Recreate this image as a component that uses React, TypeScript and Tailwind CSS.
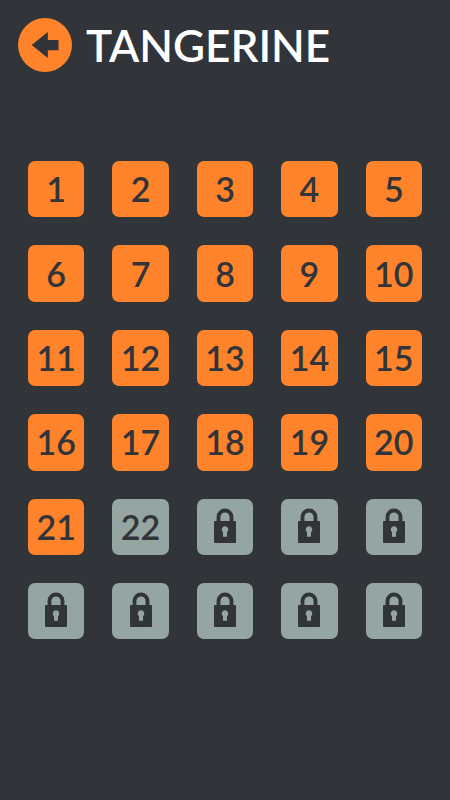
const TOTAL = 30;
const COMPLETED = 21;
const UNLOCKED = 22;

function BackArrow() {
  return (
    <svg viewBox="0 0 54 54" className="size-full" fill="#313439" aria-hidden="true">
      <path d="M13.7 27 29.8 14v8H40.5v10.3H29.8V40Z" />
    </svg>
  );
}

function LockIcon() {
  return (
    <svg viewBox="0 0 22 38" className="h-[38px] w-[22px]" aria-hidden="true">
      <path d="M4.500 14V9a6.500 6.500 0 0 1 13 0V14" fill="none" stroke="#313439" strokeWidth="3.8" />
      <path
        fill="#313439"
        fillRule="evenodd"
        d="M.8 13H21.2a.8.8 0 0 1 .8.8V34.200a.8.8 0 0 1-.8.8H.8a.8.8 0 0 1-.8-.8V13.800a.8.8 0 0 1 .8-.8ZM11 18.200a3.300 3.300 0 0 0-2 5.900V28.700h4V24.100a3.300 3.300 0 0 0-2-5.900Z"
      />
    </svg>
  );
}

function LevelTile({ level }: { level: number }) {
  const locked = level > UNLOCKED;
  const color = level <= COMPLETED ? "bg-[#ff832b]" : "bg-[#94a5a2]";
  return (
    <button
      type="button"
      disabled={locked}
      aria-label={locked ? `Level ${level}, locked` : undefined}
      className={`flex aspect-square items-center justify-center rounded-[7px] text-[34px] leading-none font-semibold text-[#313439] ${color}`}
    >
      {locked ? <LockIcon /> : level}
    </button>
  );
}

export default function App() {
  const levels = Array.from({ length: TOTAL }, (_, i) => i + 1);
  return (
    <div className="min-h-screen bg-[#313439] font-['Lato','Open_Sans',sans-serif]">
      <header className="flex items-center gap-3.5 px-[18px] pt-[18px]">
        <button type="button" aria-label="Back" className="size-[54px] shrink-0 rounded-full bg-[#ff832b]">
          <BackArrow />
        </button>
        <h1 className="text-[44px] leading-[54px] font-semibold text-white">TANGERINE</h1>
      </header>
      <main className="grid grid-cols-5 gap-7 px-7 pt-[89px] pb-7">
        {levels.map((level) => (
          <LevelTile key={level} level={level} />
        ))}
      </main>
    </div>
  );
}
